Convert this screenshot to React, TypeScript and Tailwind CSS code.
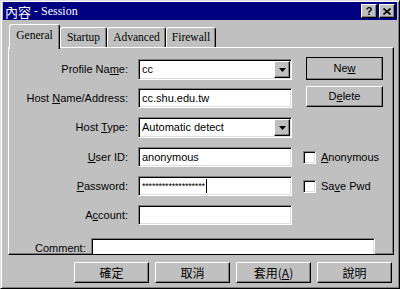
import React from "react";

// win95 style bevels
const raised =
  "border border-t-white border-l-white border-r-black border-b-black shadow-[inset_-1px_-1px_0_#808080]";
const sunken =
  "border border-t-[#808080] border-l-[#808080] border-r-white border-b-white shadow-[inset_1px_1px_0_#000,inset_-1px_-1px_0_#dfdfdf]";

const sans = "font-['Liberation_Sans',Arial,sans-serif] text-[11px] text-black";

const DownArrow: React.FC = () => (
  <svg width="7" height="4" viewBox="0 0 7 4">
    <path d="M0 0h7L3.5 4z" fill="#000" />
  </svg>
);

const Combo: React.FC<{ value: string }> = ({ value }) => (
  <div className={`${sunken} w-[154px] h-[21px] bg-white flex items-center`}>
    <span className="flex-1 pl-[3px] leading-none">{value}</span>
    <div className={`${raised} bg-[#c0c0c0] w-[16px] h-[17px] mr-[1px] flex items-center justify-center`}>
      <DownArrow />
    </div>
  </div>
);

const Edit: React.FC<{ children?: React.ReactNode; w?: string }> = ({ children, w = "w-[154px]" }) => (
  <div className={`${sunken} ${w} h-[20px] bg-white flex items-center pl-[3px] leading-none shrink-0`}>
    {children}
  </div>
);

const Label: React.FC<{ children: React.ReactNode }> = ({ children }) => (
  <div className="w-[119px] h-[21px] flex items-center justify-end shrink-0">
    <span>{children}</span>
  </div>
);

const Check: React.FC<{ children: React.ReactNode }> = ({ children }) => (
  <div className="flex items-center ml-[11px] mt-[2px]">
    <div className={`${sunken} w-[13px] h-[13px] bg-white`} />
    <span className="ml-[5px]">{children}</span>
  </div>
);

const Tab: React.FC<{ label: string; active?: boolean; w: string }> = ({ label, active, w }) => (
  <div
    className={
      active
        ? `${w} h-[25px] -mb-[2px] relative z-10 bg-[#c0c0c0] border-t border-l border-r border-t-white border-l-white border-r-black rounded-t-[3px] shadow-[inset_-1px_0_0_#808080] flex justify-center pt-[3px]`
        : `${w} h-[20px] bg-[#c0c0c0] border-t border-l border-r border-t-white border-l-white border-r-black rounded-t-[3px] shadow-[inset_-1px_0_0_#808080] flex justify-center pt-[2px]`
    }
  >
    <span className="font-['Liberation_Serif','Times_New_Roman',serif] text-[11.5px] leading-[14px]">{label}</span>
  </div>
);

const BottomBtn: React.FC<{ children: React.ReactNode }> = ({ children }) => (
  <div
    className={`${raised} w-[75px] h-[21px] flex items-center justify-center font-['Noto_Sans_CJK_TC','Liberation_Sans',sans-serif] text-[12px] leading-none`}
  >
    <span>{children}</span>
  </div>
);

export default function App() {
  return (
    <div
      className={`w-[400px] h-[289px] bg-[#c0c0c0] border border-t-[#dfdfdf] border-l-[#dfdfdf] border-r-black border-b-black shadow-[inset_1px_1px_0_#fff,inset_-1px_-1px_0_#808080] pt-[1px] px-[2px] flex flex-col ${sans}`}
    >
      {/* title bar */}
      <div className="h-[18px] bg-[#000080] flex items-center justify-between pl-[2px] pr-[2px]">
        <div className="text-white flex items-center leading-none">
          <span className="font-['Noto_Sans_CJK_TC',sans-serif] text-[13px]">內容</span>
          <span className="font-['Liberation_Serif',serif] text-[12px] ml-[3px]">- Session</span>
        </div>
        <div className="flex gap-[2px]">
          <div className={`${raised} bg-[#c0c0c0] w-[16px] h-[14px] flex items-center justify-center font-bold text-[11px] leading-none`}>
            ?
          </div>
          <div className={`${raised} bg-[#c0c0c0] w-[16px] h-[14px] flex items-center justify-center`}>
            <svg width="8" height="7" viewBox="0 0 8 7">
              <path d="M0.5 0.5L7.5 6.5M7.5 0.5L0.5 6.5" stroke="#000" strokeWidth="1.6" />
            </svg>
          </div>
        </div>
      </div>

      {/* tabs */}
      <div className="mt-[4px] ml-[6px] h-[23px] flex items-end">
        <Tab label="General" active w="w-[51px]" />
        <Tab label="Startup" w="w-[47px]" />
        <Tab label="Advanced" w="w-[59px]" />
        <Tab label="Firewall" w="w-[50px]" />
      </div>

      {/* panel */}
      <div className="ml-[5px] w-[386px] h-[208px] border border-t-white border-l-white border-r-black border-b-black shadow-[inset_-1px_-1px_0_#808080] overflow-hidden pt-[11px]">
        <div className="flex items-start h-[29px]">
          <Label>
            Profile Na<u>m</u>e:
          </Label>
          <div className="ml-[10px]">
            <Combo value="cc" />
          </div>
          <div className={`${raised} ml-[14px] -mt-[2px] w-[77px] h-[23px] outline outline-1 outline-black -outline-offset-1 flex items-center justify-center`}>
            <span>
              Ne<u>w</u>
            </span>
          </div>
        </div>

        <div className="flex items-start h-[29px]">
          <Label>
            Host <u>N</u>ame/Address:
          </Label>
          <div className="ml-[10px]">
            <Edit>cc.shu.edu.tw</Edit>
          </div>
          <div className={`${raised} ml-[14px] -mt-[2px] w-[77px] h-[21px] flex items-center justify-center`}>
            <span>
              D<u>e</u>lete
            </span>
          </div>
        </div>

        <div className="flex items-start h-[30px]">
          <Label>
            Host <u>T</u>ype:
          </Label>
          <div className="ml-[10px]">
            <Combo value="Automatic detect" />
          </div>
        </div>

        <div className="flex items-start h-[29px]">
          <Label>
            <u>U</u>ser ID:
          </Label>
          <div className="ml-[10px]">
            <Edit>anonymous</Edit>
          </div>
          <Check>
            <u>A</u>nonymous
          </Check>
        </div>

        <div className="flex items-start h-[29px]">
          <Label>
            <u>P</u>assword:
          </Label>
          <div className="ml-[10px]">
            <Edit>
              <span className="text-[9px] tracking-[-0.2px]">{"*".repeat(19)}</span>
              <span className="w-[1px] h-[14px] bg-black ml-[1px]" />
            </Edit>
          </div>
          <Check>
            Sa<u>v</u>e Pwd
          </Check>
        </div>

        <div className="flex items-start h-[33px]">
          <Label>
            A<u>c</u>count:
          </Label>
          <div className="ml-[10px]">
            <Edit />
          </div>
        </div>

        <div className="flex items-start pl-[26px]">
          <div className="w-[56px] h-[20px] flex items-center">Comment:</div>
          <Edit w="w-[284px]" />
        </div>
      </div>

      {/* dialog buttons */}
      <div className="mt-[7px] mr-[5px] flex justify-end gap-[6px]">
        <BottomBtn>確定</BottomBtn>
        <BottomBtn>取消</BottomBtn>
        <BottomBtn>
          套用(<u>A</u>)
        </BottomBtn>
        <BottomBtn>說明</BottomBtn>
      </div>
    </div>
  );
}
